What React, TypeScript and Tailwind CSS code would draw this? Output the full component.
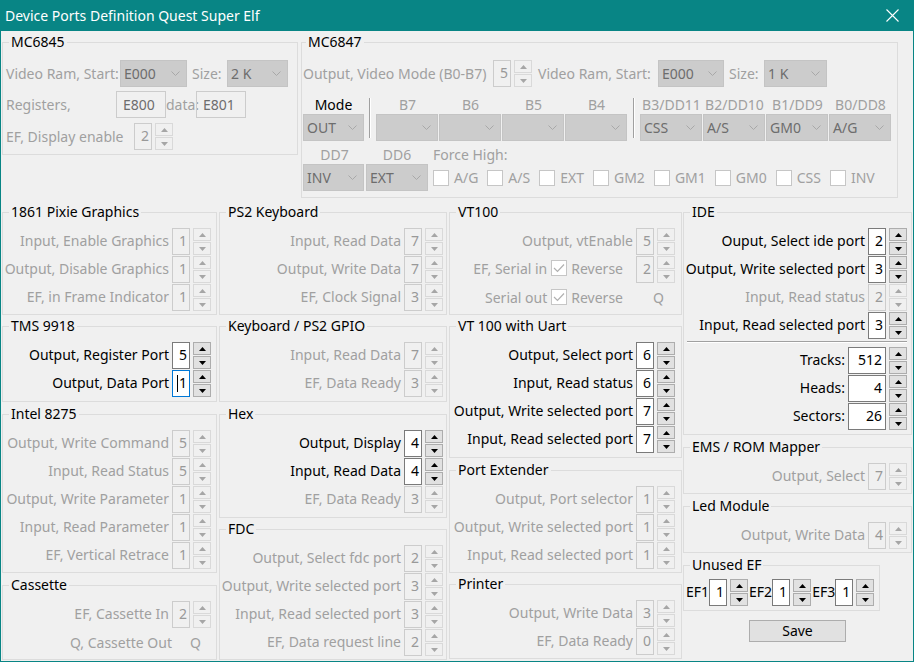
import React from 'react';

// Windows-style port definition dialog. Disabled controls are grey, enabled
// ones black with white number boxes.
const OFF = 'text-[#a0a0a0]';

function Chevron() {
  return (
    <svg width="9" height="5" viewBox="0 0 9 5">
      <path d="M0.5 0.5 L4.5 4.5 L8.5 0.5" fill="none" stroke="#a8a8a8" strokeWidth="1" />
    </svg>
  );
}

function Combo({ value = '', className = '' }: { value?: string; className?: string }) {
  return (
    <div
      className={`flex h-[27px] shrink-0 items-center justify-between border border-[#c4c4c4] bg-[#cccccc] pl-[3px] pr-[6px] text-[#6d6d6d] ${className}`}
    >
      <span className="leading-[25px]">{value}</span>
      <Chevron />
    </div>
  );
}

function Tri({ up, fill }: { up?: boolean; fill: string }) {
  return (
    <svg width="7" height="4" viewBox="0 0 7 4">
      <path d={up ? 'M0 4 L3.5 0 L7 4 Z' : 'M0 0 L3.5 4 L7 0 Z'} fill={fill} />
    </svg>
  );
}

function Spin({ on }: { on?: boolean }) {
  const btn = on ? 'border-[#adadad] bg-[#e1e1e1]' : 'border-[#d9d9d9] bg-[#f0f0f0]';
  const fill = on ? '#000000' : '#a6a6a6';
  return (
    <div className="ml-[3px] flex h-[27px] w-[18px] shrink-0 flex-col gap-px">
      <div className={`flex h-[13px] items-center justify-center border ${btn}`}>
        <Tri up fill={fill} />
      </div>
      <div className={`flex h-[13px] items-center justify-center border ${btn}`}>
        <Tri fill={fill} />
      </div>
    </div>
  );
}

function Num({ v, on, focus, wide }: { v: string; on?: boolean; focus?: boolean; wide?: boolean }) {
  const look = focus
    ? 'border-[#0078d7] bg-white text-black'
    : on
      ? 'border-[#7a7a7a] bg-white text-black'
      : 'border-[#cccccc] bg-[#f0f0f0] text-[#999999]';
  return (
    <div
      className={`flex h-[27px] shrink-0 items-center justify-end border pb-[2px] pr-[2px] leading-[22px] ${look} ${wide ? 'w-[38px] pr-[3px]' : 'w-[18px]'}`}
    >
      {focus && <span className="mr-px mt-[2px] h-[17px] w-px bg-black" />}
      {v}
    </div>
  );
}

function Row({ label, v, on, focus, wide }: { label: string; v: string; on?: boolean; focus?: boolean; wide?: boolean }) {
  return (
    <div className="flex h-7 items-start justify-end">
      <span className={`mr-[3px] whitespace-nowrap leading-[25px] ${on ? 'text-black' : OFF}`}>{label}</span>
      <Num v={v} on={on} focus={focus} wide={wide} />
      <Spin on={on} />
    </div>
  );
}

function Check({ checked }: { checked?: boolean }) {
  return (
    <span className="flex h-[16px] w-[16px] shrink-0 items-center justify-center border border-[#c6c6c6] bg-white">
      {checked && (
        <svg width="12" height="10" viewBox="0 0 12 10">
          <path d="M1 5 L4.5 8.5 L11 1.5" fill="none" stroke="#b0b0b0" strokeWidth="1.2" />
        </svg>
      )}
    </span>
  );
}

function Group({ title, children, className = '', pr = 'pr-[5px]' }: { title: string; children: React.ReactNode; className?: string; pr?: string }) {
  return (
    <fieldset className={`border border-[#dcdcdc] ${className}`}>
      <legend className="ml-[6px] px-[2px] leading-5 text-black">{title}</legend>
      <div className={`flex flex-col pb-[2px] pt-[6px] ${pr}`}>{children}</div>
    </fieldset>
  );
}

function QRow({ label }: { label: string }) {
  return (
    <div className="flex h-7 items-start justify-end">
      <span className={`whitespace-nowrap leading-[27px] ${OFF}`}>{label}</span>
      <span className={`w-[39px] pl-[8px] text-center leading-[27px] ${OFF}`}>Q</span>
    </div>
  );
}

function Mc6845() {
  return (
    <fieldset className="h-[123px] w-[296px] shrink-0 border border-[#dcdcdc]">
      <legend className="ml-[6px] px-[2px] leading-5 text-black">MC6845</legend>
      <div className={`flex flex-col pl-[3px] ${OFF}`}>
        <div className="mt-[8px] flex h-[27px] items-center">
          <span className="w-[114px] whitespace-nowrap">Video Ram, Start:</span>
          <Combo value="E000" className="w-[67px]" />
          <span className="ml-[5px] w-[35px]">Size:</span>
          <Combo value="2 K" className="w-[61px]" />
        </div>
        <div className="mt-[4px] flex h-[27px] items-center">
          <span className="w-[110px] whitespace-nowrap">Registers,</span>
          <div className="h-[27px] w-[50px] border border-[#cccccc] pl-[6px] leading-[25px] text-[#6d6d6d]">E800</div>
          <span className="w-[30px]">data:</span>
          <div className="h-[27px] w-[50px] border border-[#cccccc] pl-[6px] leading-[25px] text-[#6d6d6d]">E801</div>
        </div>
        <div className="mt-[5px] flex h-[27px] items-center">
          <span className="w-[128px] whitespace-nowrap">EF, Display enable</span>
          <Num v="2" />
          <Spin />
        </div>
      </div>
    </fieldset>
  );
}

function Etched({ className = '' }: { className?: string }) {
  return <div className={`w-[2px] shrink-0 border-l border-[#a0a0a0] bg-white ${className}`} />;
}

function Col({ label, value, dark, w = 'w-[63px]', cw = 'w-[62px]' }: { label: string; value?: string; dark?: boolean; w?: string; cw?: string }) {
  return (
    <div className={`flex shrink-0 flex-col ${w}`}>
      <span className={`h-[19px] whitespace-nowrap text-center leading-[19px] ${dark ? 'text-black' : OFF}`}>{label}</span>
      <Combo value={value} className={cw} />
    </div>
  );
}

function Mc6847() {
  const force = ['A/G', 'A/S', 'EXT', 'GM2', 'GM1', 'GM0', 'CSS', 'INV'];
  return (
    <fieldset className="ml-[3px] h-[166px] w-[597px] shrink-0 border border-[#dcdcdc]">
      <legend className="ml-[4px] px-[2px] leading-5 text-black">MC6847</legend>
      <div className={`flex flex-col pl-px ${OFF}`}>
        <div className="mt-[8px] flex h-[27px] items-center">
          <span className="w-[190px] whitespace-nowrap">Output, Video Mode (B0-B7)</span>
          <Num v="5" />
          <Spin />
          <span className="ml-[6px] w-[120px] whitespace-nowrap">Video Ram, Start:</span>
          <Combo value="E000" className="w-[66px]" />
          <span className="ml-[5px] w-[35px]">Size:</span>
          <Combo value="1 K" className="w-[63px]" />
        </div>
        <div className="mt-[8px] flex items-start">
          <Col label="Mode" value="OUT" dark w="w-[61px]" cw="w-[61px]" />
          <Etched className="ml-[5px] mr-[5px] mt-[3px] h-[40px]" />
          <Col label="B7" />
          <Col label="B6" />
          <Col label="B5" />
          <Col label="B4" />
          <Etched className="ml-[5px] mr-[5px] mt-[3px] h-[40px]" />
          <Col label="B3/DD11" value="CSS" />
          <Col label="B2/DD10" value="A/S" />
          <Col label="B1/DD9" value="GM0" />
          <Col label="B0/DD8" value="A/G" />
        </div>
        <div className="mt-[4px] flex items-end">
          <Col label="DD7" value="INV" cw="w-[61px]" />
          <Col label="DD6" value="EXT" w="w-[62px]" cw="w-[62px]" />
          <div className="ml-[5px] flex flex-col">
            <span className="h-[19px] whitespace-nowrap leading-[19px]">Force High:</span>
            <div className="flex h-[27px] items-center gap-x-[9px]">
              {force.map((f) => (
                <span key={f} className="flex items-center gap-[5px]">
                  <Check />
                  <span>{f}</span>
                </span>
              ))}
            </div>
          </div>
        </div>
      </div>
    </fieldset>
  );
}

export default function App() {
  return (
    <div className="flex h-[662px] w-[914px] flex-col overflow-hidden bg-[#088585] font-['Noto_Sans',sans-serif] text-[14px] text-black">
      <div className="flex h-[31px] shrink-0 items-center justify-between pl-[5px] pr-[15px] text-white">
        <span>Device Ports Definition Quest Super Elf</span>
        <svg width="13" height="13" viewBox="0 0 13 13">
          <path d="M0.5 0.5 L12.5 12.5 M12.5 0.5 L0.5 12.5" stroke="#ffffff" strokeWidth="1.1" />
        </svg>
      </div>
      <div className="mx-px mb-px flex flex-1 flex-col bg-[#f0f0f0] pt-px">
        <div className="ml-px flex items-start">
          <Mc6845 />
          <Mc6847 />
        </div>

        <div className="mt-[4px] flex items-start">
          {/* column 1 */}
          <div className="ml-px flex w-[215px] shrink-0 flex-col gap-px">
            <Group title="1861 Pixie Graphics">
              <Row label="Input, Enable Graphics" v="1" />
              <Row label="Output, Disable Graphics" v="1" />
              <Row label="EF, in Frame Indicator" v="1" />
            </Group>
            <Group title="TMS 9918" className="pb-px">
              <Row label="Output, Register Port" v="5" on />
              <Row label="Output, Data Port" v="1" on focus />
            </Group>
            <Group title="Intel 8275" className="mt-px">
              <Row label="Output, Write Command" v="5" />
              <Row label="Input, Read Status" v="5" />
              <Row label="Output, Write Parameter" v="1" />
              <Row label="Input, Read Parameter" v="1" />
              <Row label="EF, Vertical Retrace" v="1" />
            </Group>
            <Group title="Cassette" className="mt-px">
              <Row label="EF, Cassette In" v="2" />
              <QRow label="Q, Cassette Out" />
            </Group>
          </div>

          {/* column 2 */}
          <div className="ml-[2px] flex w-[228px] shrink-0 flex-col gap-px">
            <Group title="PS2 Keyboard" pr="pr-[3px]">
              <Row label="Input, Read Data" v="7" />
              <Row label="Output, Write Data" v="7" />
              <Row label="EF, Clock Signal" v="3" />
            </Group>
            <Group title="Keyboard / PS2 GPIO" pr="pr-[3px]" className="pb-px">
              <Row label="Input, Read Data" v="7" />
              <Row label="EF, Data Ready" v="3" />
            </Group>
            <Group title="Hex" pr="pr-[3px]" className="mt-px pb-px">
              <Row label="Output, Display" v="4" on />
              <Row label="Input, Read Data" v="4" on />
              <Row label="EF, Data Ready" v="3" />
            </Group>
            <Group title="FDC" pr="pr-[3px]">
              <Row label="Output, Select fdc port" v="2" />
              <Row label="Output, Write selected port" v="3" />
              <Row label="Input, Read selected port" v="3" />
              <Row label="EF, Data request line" v="2" />
            </Group>
          </div>

          {/* column 3 */}
          <div className="ml-[2px] flex w-[233px] shrink-0 flex-col gap-px">
            <Group title="VT100" pr="pr-[6px]">
              <Row label="Output, vtEnable" v="5" />
              <div className="flex h-7 items-start justify-end">
                <span className={`whitespace-nowrap leading-[25px] ${OFF}`}>EF, Serial in</span>
                <span className="mx-[4px] mt-[4px]">
                  <Check checked />
                </span>
                <span className={`mr-[13px] leading-[25px] ${OFF}`}>Reverse</span>
                <Num v="2" />
                <Spin />
              </div>
              <div className="flex h-7 items-start justify-end">
                <span className={`whitespace-nowrap leading-[27px] ${OFF}`}>Serial out</span>
                <span className="mx-[4px] mt-[5px]">
                  <Check checked />
                </span>
                <span className={`mr-[13px] leading-[27px] ${OFF}`}>Reverse</span>
                <span className={`w-[39px] pl-[6px] text-center leading-[27px] ${OFF}`}>Q</span>
              </div>
            </Group>
            <Group title="VT 100 with Uart" pr="pr-[6px]" className="pb-px">
              <Row label="Output, Select port" v="6" on />
              <Row label="Input, Read status" v="6" on />
              <Row label="Output, Write selected port" v="7" on />
              <Row label="Input, Read selected port" v="7" on />
            </Group>
            <Group title="Port Extender" pr="pr-[6px]" className="mt-px">
              <Row label="Output, Port selector" v="1" />
              <Row label="Output, Write selected port" v="1" />
              <Row label="Input, Read selected port" v="1" />
            </Group>
            <Group title="Printer" pr="pr-[6px]">
              <Row label="Output, Write Data" v="3" />
              <Row label="EF, Data Ready" v="0" />
            </Group>
          </div>

          {/* column 4 */}
          <div className="ml-px flex w-[229px] shrink-0 flex-col gap-[2px]">
            <Group title="IDE" pr="pr-[4px]" className="pb-px">
              <Row label="Ouput, Select ide port" v="2" on />
              <Row label="Output, Write selected port" v="3" on />
              <Row label="Input, Read status" v="2" />
              <Row label="Input, Read selected port" v="3" on />
              <div className="mb-[4px] ml-[3px] mt-px h-[2px] border-t border-[#a0a0a0] bg-white" />
              <Row label="Tracks:" v="512" on wide />
              <Row label="Heads:" v="4" on wide />
              <Row label="Sectors:" v="26" on wide />
            </Group>
            <Group title="EMS / ROM Mapper" pr="pr-[4px]">
              <Row label="Output, Select" v="7" />
            </Group>
            <Group title="Led Module" pr="pr-[4px]">
              <Row label="Output, Write Data" v="4" />
            </Group>
            <Group title="Unused EF" className="w-[197px] pb-px" pr="pr-0">
              <div className="-mt-[2px] flex h-7 items-start pl-[2px]">
                {['EF1', 'EF2', 'EF3'].map((e) => (
                  <div key={e} className="mr-px flex items-start">
                    <span className="leading-[25px]">{e}</span>
                    <Num v="1" on />
                    <Spin on />
                  </div>
                ))}
              </div>
            </Group>
            <div className="mt-[7px] flex justify-center">
              <button className="h-[22px] w-[97px] border border-[#adadad] bg-[#e1e1e1] leading-5 text-black">Save</button>
            </div>
          </div>
        </div>
      </div>
    </div>
  );
}
